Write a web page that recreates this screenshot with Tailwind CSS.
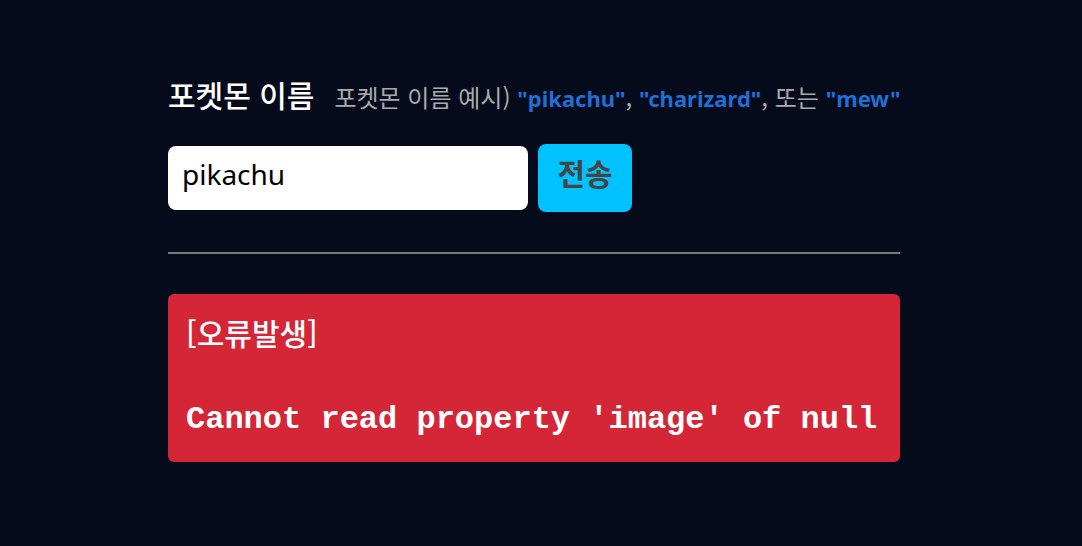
<!DOCTYPE html>
<html lang="ko">
<head>
<meta charset="utf-8">
<meta name="viewport" content="width=device-width, initial-scale=1">
<title>포켓몬</title>
<script src="https://cdn.jsdelivr.net/npm/@tailwindcss/browser@4"></script>
</head>
<body class="min-h-screen bg-[#050b1a] font-['Noto_Sans_CJK_KR',sans-serif] text-white">
<main class="mx-auto flex w-full max-w-[746px] flex-col pt-[74px] pb-20 pr-3.5">
  <form>
    <label for="name" class="flex items-baseline gap-5 whitespace-nowrap text-[30px] leading-10">
      <span class="font-medium">포켓몬 이름</span>
      <small class="text-2xl text-[#aaaaaa]">포켓몬 이름 예시) <b class="font-['Noto_Sans',sans-serif] text-[22px] text-[#1f6fd6]">"pikachu"</b>, <b class="font-['Noto_Sans',sans-serif] text-[22px] text-[#1f6fd6]">"charizard"</b>, 또는 <b class="font-['Noto_Sans',sans-serif] text-[22px] text-[#1f6fd6]">"mew"</b></small>
    </label>
    <div class="mt-[30px] flex items-center gap-2.5">
      <input id="name" value="pikachu" class="h-16 w-[360px] rounded-lg bg-white px-3.5 pb-2 font-['Noto_Sans',sans-serif] text-[28px] text-black">
      <button type="submit" class="h-[68px] w-[94px] rounded-lg bg-[#00c2ff] pb-3 text-[30px] font-bold text-[#444444]">전송</button>
    </div>
  </form>
  <hr class="my-10 border-t-2 border-[#777777]">
  <div role="alert" class="rounded-md bg-[#d42637] px-[18px] pt-[18px] pb-[22px]">
    <p class="text-[30px] leading-10 font-medium">[오류발생]</p>
    <pre class="mt-12 font-['Courier','Liberation_Mono',monospace] text-[32px] leading-10 font-bold">Cannot read property 'image' of null</pre>
  </div>
</main>
</body>
</html>
